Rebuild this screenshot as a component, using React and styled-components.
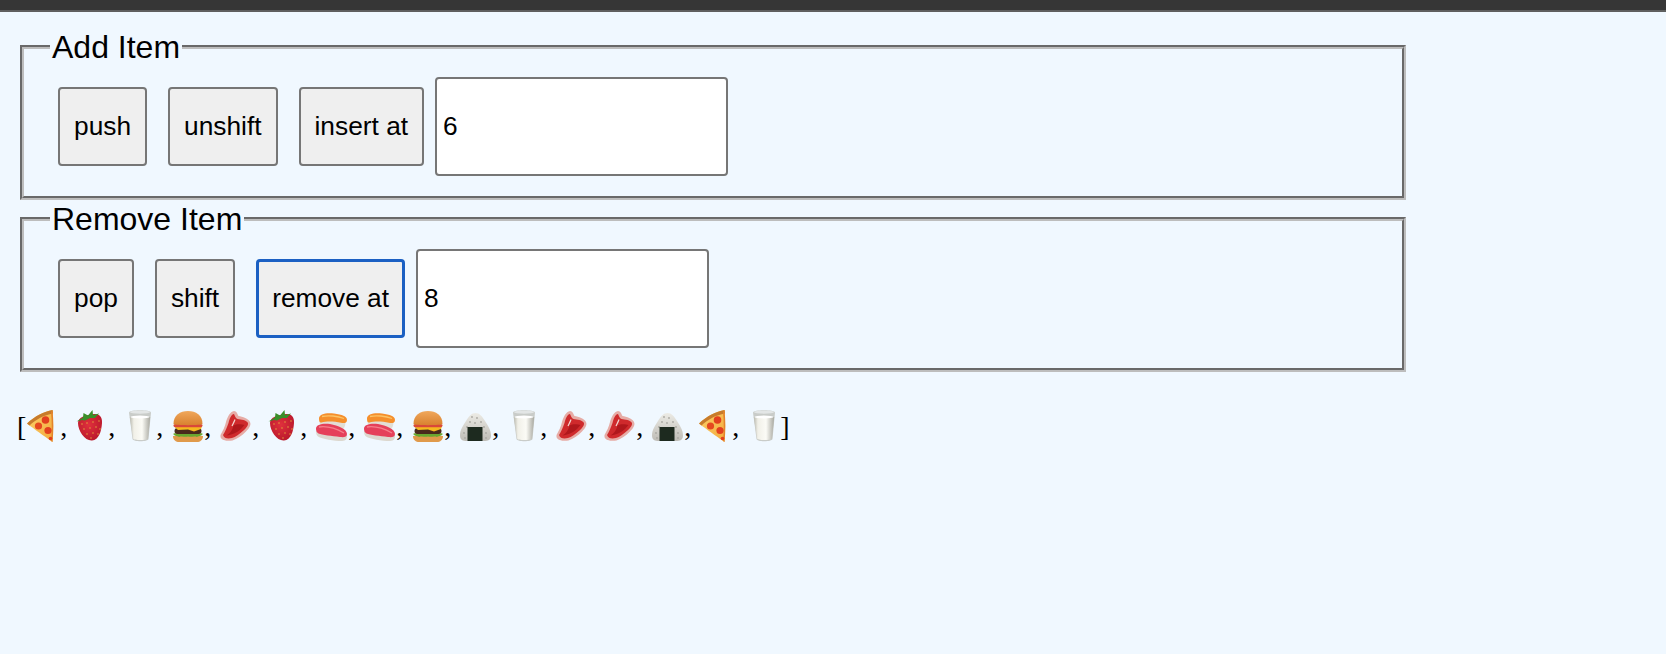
import React from "react";
import styled, { createGlobalStyle } from "styled-components";

const GlobalStyle = createGlobalStyle`
  html, body {
    margin: 0;
    background: #f0f8ff;
    color: #000;
    font-family: "Liberation Serif", serif;
  }
`;

const TopBar = styled.div`
  height: 10px;
  background: #363636;
  border-bottom: 2px solid #5f5f5f;
`;

const Page = styled.main`
  padding: 17px 0 0 20px;
`;

const Group = styled.fieldset`
  box-sizing: border-box;
  width: 1386px;
  height: 171px;
  margin: 0 0 1px;
  padding: 11.500px 0 0 34px;
  min-width: 0;
  border: 4px groove #bdbdbd;
`;

const Legend = styled.legend`
  padding: 0 2px;
  margin-left: -8px;
  font: 32px/36px "Liberation Sans", Arial, sans-serif;
`;

const Row = styled.div`
  display: flex;
  align-items: center;
  gap: 11px;
`;

const Buttons = styled.div`
  display: flex;
  gap: 21px;
`;

const Button = styled.button`
  box-sizing: border-box;
  height: 79px;
  padding: 0 ${(p) => (p.$focused ? "13px" : "14px")};
  border: ${(p) => (p.$focused ? "3px solid #1b60c3" : "2px solid #767676")};
  border-radius: 4px;
  background: #efefef;
  color: #000;
  font: 26.3px "Liberation Sans", Arial, sans-serif;
`;

const NumberInput = styled.input`
  box-sizing: border-box;
  width: 293px;
  height: 99px;
  padding: 0 6px;
  border: 2px solid #767676;
  border-radius: 4px;
  background: #fff;
  color: #000;
  font: 26.3px "Liberation Sans", Arial, sans-serif;
`;

const List = styled.div`
  margin: 37px 0 0 -3px;
  font-size: 28px;
  line-height: 34px;
  white-space: pre;
`;

const Cell = styled.svg`
  width: 34px;
  height: 34px;
  vertical-align: -7px;
`;

const Pizza = () => (
  <Cell viewBox="0 0 34 34">
    <defs>
      <linearGradient id="pz" x1="0" y1="0" x2="1" y2="1">
        <stop offset="0" stopColor="#fbd26a" />
        <stop offset="1" stopColor="#f3a93c" />
      </linearGradient>
    </defs>
    <path d="M1 14.500 C9 7 18 2.500 26.500 1 C27.500 11 27.500 23 26.500 33 C18 27 8 20 1 14.500Z" fill="url(#pz)" />
    <path d="M1 14.500 C9 7 18 2.500 26.500 1 L27 4.500 C18 6 10 10.500 3.500 16.500Z" fill="#c77b2c" />
    <path d="M26.500 1 C27.500 11 27.500 23 26.500 33 L25 32 C26 22 26 12 25 3Z" fill="#e4832a" />
    <circle cx="19.500" cy="11" r="3.800" fill="#e2401f" />
    <circle cx="22" cy="21.500" r="3.600" fill="#e2401f" />
    <circle cx="12.500" cy="17" r="3.600" fill="#e5481f" />
    <circle cx="24.500" cy="29.500" r="1.800" fill="#e2401f" />
  </Cell>
);

const Strawberry = () => (
  <Cell viewBox="0 0 34 34">
    <defs>
      <radialGradient id="sb" cx="0.45" cy="0.4" r="0.7">
        <stop offset="0" stopColor="#e0303c" />
        <stop offset="1" stopColor="#b5162a" />
      </radialGradient>
    </defs>
    <path d="M4 14 C4 8 12 6 18 5.500 C24 4 28.500 7 28 14 C27.500 22 25 31 18 31.500 C11 32 4 22 4 14Z" fill="url(#sb)" />
    <path d="M2.500 12.500 L9 8.500 L9.500 4 L14 6.500 L18.500 1 L19 6 L25 4.500 L21 9 L16 9 L11 11.500 L8 11Z" fill="#3a8f2a" />
    {[[8, 15], [13, 14], [19, 13], [25, 12], [10, 20], [16, 19], [22, 18], [26, 20], [13, 25], [19, 24], [24, 25], [17, 29]].map(([x, y]) => (
      <circle key={`${x}-${y}`} cx={x} cy={y} r="0.700" fill="#e8b23f" />
    ))}
  </Cell>
);

const Milk = () => (
  <Cell viewBox="0 0 34 34">
    <defs>
      <linearGradient id="mk" x1="0" y1="0" x2="1" y2="0">
        <stop offset="0" stopColor="#b8b8ae" />
        <stop offset="0.2" stopColor="#f1f0e8" />
        <stop offset="0.6" stopColor="#fbfbf6" />
        <stop offset="1" stopColor="#a8a8a0" />
      </linearGradient>
    </defs>
    <path d="M7 3.500 C7 0.500 29 0.500 29 3.500 L26.500 30 C26 33 11 33 10.500 30Z" fill="#c9ccc9" />
    <path d="M7.800 8 C12 9 24 9 28.200 8 L26 29.500 C25.500 31.500 11.500 31.500 11 29.500Z" fill="url(#mk)" />
    <ellipse cx="18" cy="8" rx="9.500" ry="1.500" fill="#fff" />
    <ellipse cx="18" cy="3.200" rx="10" ry="1.600" fill="#e3e6e6" />
  </Cell>
);

const Burger = () => (
  <Cell viewBox="0 0 34 34">
    <defs>
      <linearGradient id="bn" x1="0" y1="0" x2="0" y2="1">
        <stop offset="0" stopColor="#f0a85c" />
        <stop offset="1" stopColor="#d9812f" />
      </linearGradient>
    </defs>
    <path d="M3 27 H33 C33 31 30 33 27 33 H9 C6 33 3 31 3 27Z" fill="#e09a4b" />
    <path d="M3.500 24.500 C8 23 28 23 32.500 24.500 C33 27 29 26.500 27 28 C24 26.500 21 28.500 18 27.500 C15 28.500 12 26.500 9 28 C7 26.500 3 27 3.500 24.500Z" fill="#6aa82f" />
    <rect x="4.500" y="19" width="27" height="6" rx="3" fill="#4a2a1c" />
    <path d="M4 17.500 H32 L31 20 L24 22.500 L18 20.500 L8 21 Z" fill="#f5b81f" />
    <rect x="3.500" y="15" width="29" height="3.200" rx="1.600" fill="#d9483a" />
    <path d="M3.500 15 C3.500 6 10 2 18 2 C26 2 32.500 6 32.500 15 C32.500 16.500 3.500 16.500 3.500 15Z" fill="url(#bn)" />
  </Cell>
);

const Steak = () => (
  <Cell viewBox="0 0 34 34">
    <path d="M2.500 26 C4.500 22 7 18 8 13 C9.500 8 12 2.500 16 2 C18.500 2 19.500 5 20.500 7 C24.500 7.500 30.500 9.500 32 13 C33.500 16 31 19.500 28 22.500 C24 26.500 19 30 14.500 31.500 C10 32.500 3.500 31.500 2.500 28Z" fill="#e6aca6" />
    <path d="M5 26 C7 23 9 18 10.500 14 C11.500 10 13 5.500 16 5 C17 7 17.500 9.500 19.500 10 C23 10.500 28.500 11 30 14 C30.500 16.500 28 19 25.500 21.500 C21.500 25 17.500 28 14 29 C10 30 6 29.500 5 26Z" fill="#cf2a2c" />
    <path d="M8.500 26.500 C12 24.500 14.500 21 15.500 16.500 C18.500 14.500 24 15 26.500 16 C23 21 16 26 8.500 26.500Z" fill="#b0181c" />
    <path d="M14 17 C15.500 14 16.500 12 17 10.500" stroke="#f3d5cf" strokeWidth="1.200" fill="none" />
  </Cell>
);

const Sushi = () => (
  <Cell viewBox="0 0 34 34">
    <path d="M6 10 H31 C32 15 31 20 27 21 H9 C6 19 5 14 6 10Z" fill="#e2ded5" />
    <path d="M5 9.500 C5 5 12 3.500 20 4.500 C28 5.500 33 7 33 11 C33 14 30 14.500 27 13.800 C20 12 12 12 7.500 13.500 C5.500 14 5 12 5 9.500Z" fill="#f58f2c" />
    <path d="M8 7.500 C14 6 24 7 30 9.500" stroke="#fbc467" strokeWidth="1.300" fill="none" />
    <path d="M2 22 L33 26 C33.500 29 32 32 28 32 C20 32 8 30 4 27.500 C2.500 26.500 2 24.500 2 22Z" fill="#dcd8cf" />
    <path d="M2 19.500 C2 15.500 9 14 16 15 C24 16.500 33 20 33 25 C33 28 30 28.500 26 28 C18 27 8 26 4.500 24.500 C2.500 23.500 2 21.500 2 19.500Z" fill="#e5405a" />
    <path d="M5 18 C12 17 22 19.500 30 24" stroke="#f57f8b" strokeWidth="1.300" fill="none" />
  </Cell>
);

const Onigiri = () => (
  <Cell viewBox="0 0 34 34">
    <defs>
      <linearGradient id="og" x1="0" y1="0" x2="0" y2="1">
        <stop offset="0" stopColor="#ecebe5" />
        <stop offset="1" stopColor="#bebcb6" />
      </linearGradient>
    </defs>
    <path d="M17.500 4 C21.500 4 24 7 27 12 C30 17 33 21 33 26.500 C33 31 30 32 26 32 H9 C5 32 2 31 2 26.500 C2 21 5 17 8 12 C11 7 13.500 4 17.500 4Z" fill="url(#og)" />
    {[[14, 8], [19, 9], [12, 13], [17, 14], [23, 13], [9, 18], [26, 18], [6, 24], [28, 24], [7, 29], [28, 29]].map(([x, y]) => (
      <circle key={`${x}-${y}`} cx={x} cy={y} r="0.900" fill="#a9a7a1" />
    ))}
    <rect x="9.500" y="18" width="15" height="14" fill="#1d2a1f" />
  </Cell>
);

const foods = [Pizza, Strawberry, Milk, Burger, Steak, Strawberry, Sushi, Sushi, Burger, Onigiri, Milk, Steak, Steak, Onigiri, Pizza, Milk];

const App = () => (
  <>
    <GlobalStyle />
    <TopBar />
    <Page>
      <Group>
        <Legend>Add Item</Legend>
        <Row>
          <Buttons>
            <Button>push</Button>
            <Button>unshift</Button>
            <Button>insert at</Button>
          </Buttons>
          <NumberInput type="number" defaultValue="6" />
        </Row>
      </Group>
      <Group>
        <Legend>Remove Item</Legend>
        <Row>
          <Buttons>
            <Button>pop</Button>
            <Button>shift</Button>
            <Button $focused>remove at</Button>
          </Buttons>
          <NumberInput type="number" defaultValue="8" />
        </Row>
      </Group>
      <List>
        [
        {foods.map((Food, i) => (
          <React.Fragment key={i}>
            <Food />
            {i < foods.length - 1 ? ", " : ""}
          </React.Fragment>
        ))}
        ]
      </List>
    </Page>
  </>
);

export default App;
